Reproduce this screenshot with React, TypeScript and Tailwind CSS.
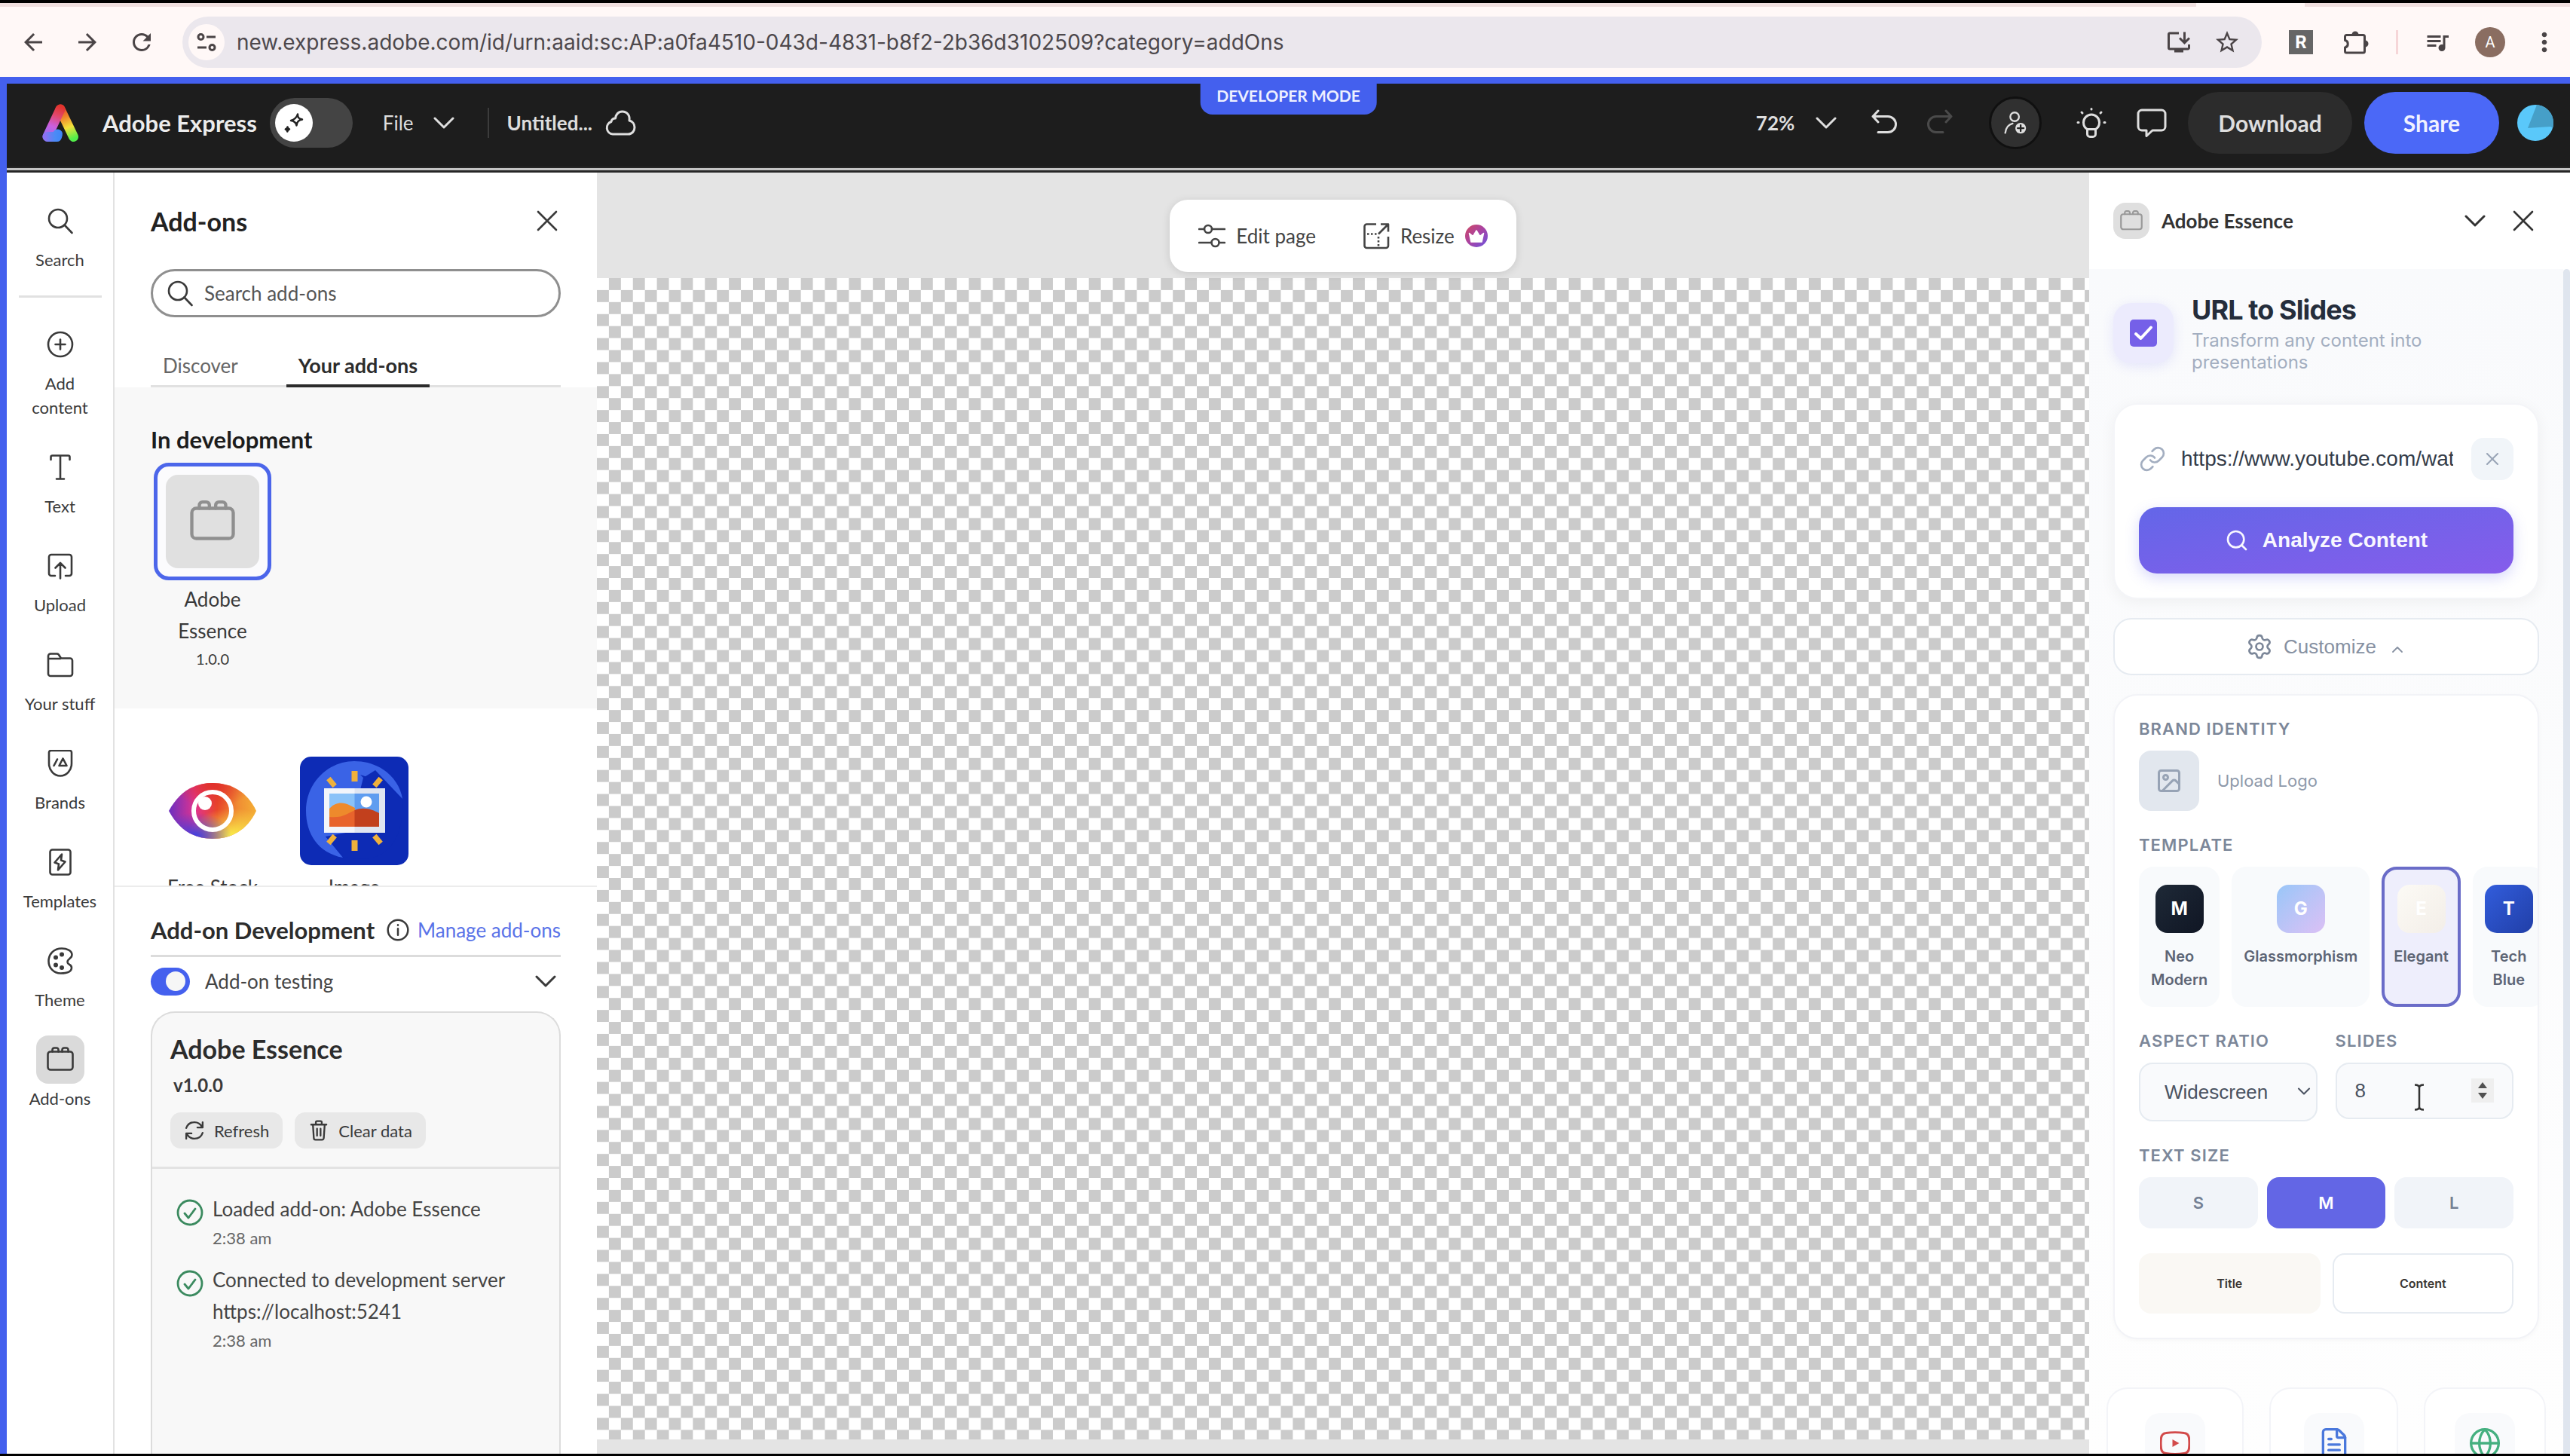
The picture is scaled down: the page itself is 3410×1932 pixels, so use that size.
import type { ReactNode, SVGProps } from "react";
import {
  ChevronDown,
  ChevronUp,
  FileText,
  Globe,
  Image as ImageIcon,
  Link,
  Search,
  Settings,
  X,
} from "lucide-react";
import {
  MdArrowBack,
  MdArrowForward,
  MdMoreVert,
  MdOutlineInstallDesktop,
  MdQueueMusic,
  MdRefresh,
  MdStarBorder,
} from "react-icons/md";

type IconProps = SVGProps<SVGSVGElement>;

function Stroke({ children, ...props }: IconProps & { children: ReactNode }) {
  return (
    <svg
      viewBox="0 0 36 36"
      fill="none"
      stroke="currentColor"
      strokeWidth={2.6}
      strokeLinecap="round"
      strokeLinejoin="round"
      aria-hidden="true"
      {...props}
    >
      {children}
    </svg>
  );
}

const BrickIcon = (p: IconProps) => (
  <Stroke {...p}>
    <rect x="1.5" y="7.500" width="33" height="24" rx="3.5" />
    <path d="M7.500 7.500V5a2.500 2.500 0 0 1 2.500-2.500h3A2.500 2.500 0 0 1 15.500 5v2.500M20.500 7.500V5A2.500 2.500 0 0 1 23 2.500h3A2.500 2.500 0 0 1 28.500 5v2.500" />
  </Stroke>
);

const SearchIcon = (p: IconProps) => (
  <Stroke {...p}>
    <circle cx="15" cy="15" r="12" />
    <path d="M23.500 23.500 33.500 34" />
  </Stroke>
);

const AddIcon = (p: IconProps) => (
  <Stroke {...p}>
    <circle cx="18" cy="18" r="16" />
    <path d="M18 11.500v13M11.500 18h13" />
  </Stroke>
);

const TextIcon = (p: IconProps) => (
  <Stroke {...p}>
    <path d="M5.500 8V4.500A2 2 0 0 1 7.500 2.500h21a2 2 0 0 1 2 2V8M18 2.500v31M13 33.500h10" />
  </Stroke>
);

const UploadIcon = (p: IconProps) => (
  <Stroke {...p}>
    <path d="M11 31H6a3 3 0 0 1-3-3V6a3 3 0 0 1 3-3h24a3 3 0 0 1 3 3v22a3 3 0 0 1-3 3h-5M18 34.500V14M11.500 20.500 18 14l6.500 6.500" />
  </Stroke>
);

const FolderIcon = (p: IconProps) => (
  <Stroke {...p}>
    <path d="M2 10V6.500A3 3 0 0 1 5 3.500h8.500a3 3 0 0 1 2.300 1L19 9.500h12a3 3 0 0 1 3 3V30a3 3 0 0 1-3 3H5a3 3 0 0 1-3-3V10h16" />
  </Stroke>
);

const BrandIcon = (p: IconProps) => (
  <Stroke {...p}>
    <path d="M3 3.500A2.500 2.500 0 0 1 5.500 1h25A2.500 2.500 0 0 1 33 3.500V18c0 9-6.500 16.500-15 16.500S3 27 3 18z" />
    <path d="m21.500 11.500-5 9.500h10zM14 12.500 9.500 21" />
  </Stroke>
);

const TemplateIcon = (p: IconProps) => (
  <Stroke {...p}>
    <rect x="4.500" y="1.500" width="27" height="33" rx="3" />
    <path d="M20 7.500 10.500 18.500l5.500 2L15 28.500l9.500-11-5.500-2z" />
  </Stroke>
);

const ThemeIcon = (p: IconProps) => (
  <Stroke {...p}>
    <path d="M20 1.500C9.500 1.500 2.500 9 2.500 18.500c0 8.500 6.500 16 16 16 6.500 0 14.500-1 14.500-7.500 0-4.500-5.500-3.500-5.500-7.500 0-4.500 6-4.500 6-9.500 0-5.500-7-8.500-13.500-8.500z" />
    <g fill="currentColor" stroke="none">
      <circle cx="12" cy="13.500" r="3" />
      <circle cx="20" cy="9.500" r="3" />
      <circle cx="12" cy="23.500" r="3" />
      <circle cx="20" cy="27" r="3" />
    </g>
  </Stroke>
);

function ExpressLogo() {
  return (
    <svg viewBox="0 0 48 50" className="h-[50px] w-12 shrink-0" fill="none" strokeLinecap="round" aria-hidden="true">
      <defs>
        <linearGradient id="legR" gradientUnits="userSpaceOnUse" x1="24" y1="3" x2="41" y2="46">
          <stop offset="0" stopColor="#e2342c" />
          <stop offset="0.35" stopColor="#f08a2c" />
          <stop offset="0.65" stopColor="#f3e23b" />
          <stop offset="1" stopColor="#52ee4a" />
        </linearGradient>
        <linearGradient id="legL" gradientUnits="userSpaceOnUse" x1="24" y1="3" x2="8" y2="46">
          <stop offset="0" stopColor="#e2342c" />
          <stop offset="0.3" stopColor="#e2486f" />
          <stop offset="0.62" stopColor="#c95fe0" />
          <stop offset="1" stopColor="#8a72f2" />
        </linearGradient>
        <linearGradient id="foot" gradientUnits="userSpaceOnUse" x1="4" y1="44" x2="26" y2="44">
          <stop offset="0" stopColor="#8a72f2" />
          <stop offset="0.6" stopColor="#4a8bf6" />
          <stop offset="1" stopColor="#3f86f7" />
        </linearGradient>
      </defs>
      <path d="M24 7 41.500 43.500" stroke="url(#legR)" strokeWidth="13" />
      <path d="M24 7 7 43" stroke="url(#legL)" strokeWidth="13" />
      <path d="M7 43.500h12.500L20.500 40" stroke="url(#foot)" strokeWidth="13" strokeLinejoin="round" />
    </svg>
  );
}

function Chevron({ className }: { className: string }) {
  return (
    <svg viewBox="0 0 28 16" className={className} fill="none" stroke="currentColor" strokeWidth="3" strokeLinecap="round" strokeLinejoin="round" aria-hidden="true">
      <path d="M2 2 14 14 26 2" />
    </svg>
  );
}

function Cross({ className }: { className: string }) {
  return (
    <svg viewBox="0 0 28 28" className={className} fill="none" stroke="currentColor" strokeWidth="2.600" strokeLinecap="round" aria-hidden="true">
      <path d="M2 2 26 26M26 2 2 26" />
    </svg>
  );
}

function BrowserBar() {
  return (
    <div className="bg-[#fff8f7] text-[#4a4446]">
      <div className="h-1 bg-black" />
      <div className="flex h-[5px] justify-end bg-[#f0dfdf] pr-[352px]">
        <div className="w-[144px] bg-[#fff8f7]" />
      </div>
      <div className="flex h-[93px] items-center pr-[14px] pl-6">
        <button aria-label="Back" className="grid size-10 place-items-center"><MdArrowBack className="size-9" /></button>
        <button aria-label="Forward" className="ml-8 grid size-10 place-items-center"><MdArrowForward className="size-9" /></button>
        <button aria-label="Reload" className="ml-8 grid size-10 place-items-center"><MdRefresh className="size-9" /></button>
        <div className="ml-[34px] flex h-[68px] flex-1 items-center rounded-full bg-[#ebe7ed] pr-7 pl-2">
          <button aria-label="Site information" className="grid size-12 place-items-center rounded-full bg-[#fff8f7]">
            <svg viewBox="0 0 26 26" className="size-[26px]" fill="none" stroke="currentColor" strokeWidth="3">
              <circle cx="5.500" cy="6" r="3.500" />
              <path d="M13 6h12M1 20h12" />
              <circle cx="20.500" cy="20" r="3.500" />
            </svg>
          </button>
          <input
            aria-label="Address"
            readOnly
            className="ml-4 min-w-0 flex-1 bg-transparent font-['Inter',sans-serif] text-[28px] text-[#4d484c] outline-none"
            value="new.express.adobe.com/id/urn:aaid:sc:AP:a0fa4510-043d-4831-b8f2-2b36d3102509?category=addOns"
          />
          <button aria-label="Install app" className="mr-7"><MdOutlineInstallDesktop className="size-9" /></button>
          <button aria-label="Bookmark"><MdStarBorder className="size-9" /></button>
        </div>
        <div className="ml-9 flex items-center">
          <span className="grid size-8 place-items-center bg-[#666] font-['Roboto',sans-serif] text-2xl font-bold text-white">R</span>
          <svg viewBox="0 0 34 34" className="ml-10 size-[34px]" aria-label="Extensions">
            <path d="M4.500 7.500h22a2 2 0 0 1 2 2V29a2 2 0 0 1-2 2h-22a2 2 0 0 1-2-2v-5c5-1 5-8.500 0-9.500v-5a2 2 0 0 1 2-2z" fill="none" stroke="currentColor" strokeWidth="3" strokeLinejoin="round" />
            <path d="M11.500 7a4.500 4.500 0 0 1 9 0zM29 14.500a4.500 4.500 0 0 1 0 9z" fill="currentColor" />
          </svg>
          <span className="ml-9 h-8 w-[3px] bg-[#f6d6d8]" />
          <MdQueueMusic className="ml-[34px] size-9" />
          <span className="ml-8 grid size-10 place-items-center rounded-full bg-[#8a6d61] font-['Roboto',sans-serif] text-xl text-white">A</span>
          <MdMoreVert className="ml-8 size-10" />
        </div>
      </div>
    </div>
  );
}

function AppHeader() {
  return (
    <header className="relative flex h-[110px] items-center bg-[#1d1d1d] pr-[22px] pb-[6px] pl-[47px] text-[#dedede]">
      <div className="absolute -top-[9px] left-1/2 flex h-[50px] -translate-x-1/2 items-center rounded-b-2xl bg-[#4460ee] px-[22px] text-[21px] font-bold text-[#eef0ff]">
        DEVELOPER MODE
      </div>
      <ExpressLogo />
      <span className="ml-8 text-[31px] font-bold whitespace-nowrap text-[#ececec]">Adobe Express</span>
      <button role="switch" aria-checked="false" aria-label="AI assistant" className="ml-[17px] h-[66px] w-[110px] rounded-full bg-[#444] p-[7px]">
        <span className="grid size-[50px] place-items-center rounded-full bg-white">
          <svg viewBox="0 0 28 28" className="size-7" fill="none" stroke="#222" strokeWidth="2.500" strokeLinejoin="round">
            <path d="M19 2.500c0 4.500 1 6 6 7-4.500 1-7 2.500-7.500 8-1-4.500-3-6-7.500-6.500 5-1.500 7.500-3.500 9-8.500z" />
            <path d="M5.500 19.500c.3 2 .8 2.500 2.500 3-1.700.4-2.300 1-2.700 3-.3-2-.8-2.500-2.500-3 1.700-.4 2.300-1 2.700-3z" fill="#222" />
          </svg>
        </span>
      </button>
      <button className="ml-10 flex items-center gap-[26px] text-[26px]">
        File <Chevron className="h-4 w-7" />
      </button>
      <span className="ml-11 h-10 w-[2px] bg-[#3c3c3c]" />
      <span className="ml-6 text-[26px] font-bold">Untitled...</span>
      <svg viewBox="0 0 42 34" className="ml-4 h-[34px] w-[42px]" fill="none" stroke="currentColor" strokeWidth="3" strokeLinejoin="round" aria-label="Saved to cloud">
        <path d="M11 32a8.500 8.500 0 0 1-2-16.500c.5-2.500 2.500-4.500 5.500-4.500C15 6 18.500 2 23.500 2 30 2 34 7 33 14c4 1 7 4.500 7 9 0 5-3.500 9-8.500 9z" />
      </svg>

      <div className="ml-auto flex items-center">
        <button className="flex items-center gap-7 text-[26px] font-bold">
          72% <Chevron className="h-4 w-7" />
        </button>
        <button aria-label="Undo" className="ml-[46px]">
          <Stroke className="size-9" strokeWidth={3}>
            <path d="M9 2 2 9.500 9 17M2 9.500h20a10.500 10.500 0 0 1 0 21H9" />
          </Stroke>
        </button>
        <button aria-label="Redo" className="ml-9 text-[#4a4a4a]">
          <Stroke className="size-9" strokeWidth={3}>
            <path d="m27 2 7 7.500-7 7.500M34 9.500H14a10.500 10.500 0 0 0 0 21h9" />
          </Stroke>
        </button>
        <button aria-label="Invite people" className="ml-12 grid size-[70px] place-items-center rounded-full border-[3px] border-[#101010] bg-[#303030]">
          <Stroke className="size-8">
            <circle cx="17" cy="9" r="6.500" />
            <path d="M3 33c1-8 5-12.500 11-14" />
            <circle cx="26" cy="26" r="8" fill="currentColor" stroke="none" />
            <path d="M26 21.500v9M21.500 26h9" stroke="#222" />
          </Stroke>
        </button>
        <button aria-label="What's new" className="ml-[46px]">
          <svg viewBox="0 0 40 42" className="h-[42px] w-10" fill="none" stroke="currentColor" strokeWidth="3" strokeLinecap="round">
            <path d="M14.500 29.500C11 27.500 9.500 23.500 9.500 20.500a10.500 10.500 0 0 1 21 0c0 3-1.500 7-5 9M14.500 29.500V36a3.500 3.500 0 0 0 3.500 3.500h4a3.500 3.500 0 0 0 3.500-3.500v-6.500zM20 2.500v.500M7 7l1 1M33 7l-1 1M2 20.500h1M37 20.500h1" />
          </svg>
        </button>
        <button aria-label="Comments" className="ml-10">
          <svg viewBox="0 0 40 38" className="h-[38px] w-10" fill="none" stroke="currentColor" strokeWidth="3" strokeLinejoin="round">
            <path d="M7 2h26a5 5 0 0 1 5 5v17a5 5 0 0 1-5 5H21l-8 7.500V29H7a5 5 0 0 1-5-5V7a5 5 0 0 1 5-5z" />
          </svg>
        </button>
        <button className="ml-7 h-[82px] rounded-full bg-[#2c2c2c] px-10 text-[30px] font-bold">Download</button>
        <button className="ml-4 h-[82px] rounded-full bg-[#4b68f7] px-[52px] text-[30px] font-bold text-[#f0f2ff]">Share</button>
        <button aria-label="Account" className="ml-6 overflow-hidden rounded-full">
          <svg viewBox="0 0 48 48" className="size-12">
            <rect width="48" height="48" fill="#5ac8fa" />
            <path d="M26 0 14 31h34V0z" fill="#469fc8" />
            <path d="M13 31h35l-4-2z" fill="#5ac8fa" />
          </svg>
        </button>
      </div>
    </header>
  );
}

function RailItem({ icon, label, active }: { icon: ReactNode; label: string; active?: boolean }) {
  return (
    <button className="flex w-full flex-col items-center gap-1">
      <span className={active ? "grid size-16 place-items-center rounded-2xl bg-[#dadada]" : "grid size-16 place-items-center"}>{icon}</span>
      <span className="w-[110px] text-center text-[22px] leading-8">{label}</span>
    </button>
  );
}

function Rail() {
  return (
    <nav className="flex w-[143px] shrink-0 flex-col items-center gap-[31px] border-r-2 border-[#e2e2e2] bg-white pt-8 text-[#3a3a3a]">
      <RailItem icon={<SearchIcon className="size-9" />} label="Search" />
      <hr className="-mb-px w-[110px] border-t-[3px] border-[#e1e1e1]" />
      <RailItem icon={<AddIcon className="size-9" />} label="Add content" />
      <RailItem icon={<TextIcon className="size-9" />} label="Text" />
      <RailItem icon={<UploadIcon className="size-9" />} label="Upload" />
      <RailItem icon={<FolderIcon className="size-9" />} label="Your stuff" />
      <RailItem icon={<BrandIcon className="size-9" />} label="Brands" />
      <RailItem icon={<TemplateIcon className="size-9" />} label="Templates" />
      <RailItem icon={<ThemeIcon className="size-9" />} label="Theme" />
      <RailItem icon={<BrickIcon className="size-9" />} label="Add-ons" active />
    </nav>
  );
}

function EyeLogo() {
  return (
    <svg viewBox="0 0 144 144" className="size-36 shrink-0" aria-hidden="true">
      <defs>
        <linearGradient id="eyeBase" x1="0" y1="0" x2="1" y2="0">
          <stop offset="0" stopColor="#6a2fc0" />
          <stop offset="0.3" stopColor="#e0338f" />
          <stop offset="0.55" stopColor="#e8452a" />
          <stop offset="0.8" stopColor="#f08e33" />
          <stop offset="1" stopColor="#f4ae35" />
        </linearGradient>
        <radialGradient id="eyeYellow" cx="0.72" cy="0.95" r="0.5">
          <stop offset="0" stopColor="#faf04a" />
          <stop offset="1" stopColor="#faf04a" stopOpacity="0" />
        </radialGradient>
        <radialGradient id="eyeBlue" cx="0.3" cy="0.95" r="0.42">
          <stop offset="0" stopColor="#3d3fe0" />
          <stop offset="1" stopColor="#3d3fe0" stopOpacity="0" />
        </radialGradient>
        <radialGradient id="eyeRed" cx="0.5" cy="0" r="0.45">
          <stop offset="0" stopColor="#e0302a" />
          <stop offset="1" stopColor="#e0302a" stopOpacity="0" />
        </radialGradient>
      </defs>
      {["url(#eyeBase)", "url(#eyeRed)", "url(#eyeYellow)", "url(#eyeBlue)"].map((fill) => (
        <path key={fill} fill={fill} d="M14 72C28 46 48 35 72 35s46 11 58 37c-12 26-34 37-58 37S28 98 14 72z" />
      ))}
      <circle cx="72" cy="72" r="25" fill="none" stroke="#fff" strokeWidth="6" />
      <circle cx="62" cy="62" r="9" fill="#fff" />
    </svg>
  );
}

function ImageLogo() {
  return (
    <svg viewBox="0 0 144 144" className="size-36 shrink-0" aria-hidden="true">
      <rect width="144" height="144" rx="15" fill="#0d2bb5" />
      <path d="M57 134C24 128 8 102 8 72 8 34 38 6 72 6c36 0 60 24 64 50L100 18 84 28 66 100 34 106z" fill="#3a63e6" />
      <path d="M80 24 120 64V110L60 110 34 106l26 28c-12-4 20 6 40-1 24-8 38-35 36-76L112 34z" fill="#0d2bb5" />
      <g fill="#f0b13c">
        <rect x="68.500" y="19" width="8" height="14" />
        <rect x="68.500" y="111" width="8" height="14" />
        <rect x="-3.500" y="-6.500" width="7" height="13" transform="translate(42 34) rotate(-40)" />
        <rect x="-3.500" y="-6.500" width="7" height="13" transform="translate(103 34) rotate(40)" />
        <rect x="-3.500" y="-6.500" width="7" height="13" transform="translate(42 110) rotate(40)" />
        <rect x="-3.500" y="-6.500" width="7" height="13" transform="translate(103 110) rotate(-40)" />
      </g>
      <rect x="32" y="42" width="81" height="59" fill="#f2f5fb" />
      <path d="M72.500 42H113v59H72.500z" fill="#dfe5f1" />
      <rect x="39" y="49" width="66" height="44" fill="#8ac2f8" />
      <path d="M72.500 49H105v44H72.500z" fill="#5f9df0" />
      <circle cx="88" cy="60" r="7.500" fill="#fff" />
      <path d="M39 69c8-9 18-9 26-5l8 4v25H39z" fill="#ee8a2c" />
      <path d="M39 80c18 2 24-5 34-9v22H39z" fill="#e8632c" />
      <path d="M72.500 71c12-5 24-1 32.500 4v18H72.500z" fill="#c2401d" />
    </svg>
  );
}

function LogEntry({ lines, time }: { lines: string[]; time: string }) {
  return (
    <li className="flex gap-3">
      <Stroke className="mt-2 size-9 shrink-0 text-[#3b8a5f]" strokeWidth={2.8}>
        <circle cx="18" cy="18" r="16" />
        <path d="m11 19 5 6 9-12" />
      </Stroke>
      <div>
        {lines.map((l) => (
          <p key={l} className="text-[26px] leading-[42px] whitespace-nowrap text-[#444]">{l}</p>
        ))}
        <p className="text-[22px] leading-9 text-[#666]">{time}</p>
      </div>
    </li>
  );
}

function AddOnsPanel() {
  return (
    <aside className="flex w-[640px] shrink-0 flex-col bg-white text-[#3a3a3a]">
      <div className="px-12 pt-8">
        <div className="flex h-16 items-center justify-between">
          <h1 className="text-[34px] font-bold text-[#222]">Add-ons</h1>
          <button aria-label="Close add-ons" className="mr-1"><Cross className="size-7" /></button>
        </div>
        <label className="mt-8 flex h-16 items-center gap-[14px] rounded-full border-[3px] border-[#8f8f8f] pl-[18px]">
          <SearchIcon className="size-9" />
          <input placeholder="Search add-ons" className="min-w-0 flex-1 bg-transparent text-[26px] outline-none placeholder:text-[#555]" />
        </label>
        <div role="tablist" className="mt-9 flex gap-12 shadow-[inset_0_-3px_0_#e1e1e1]">
          <button role="tab" aria-selected="false" className="h-[57px] px-4 text-[26px] text-[#666]">Discover</button>
          <button role="tab" aria-selected="true" className="h-[57px] border-b-[4px] border-[#2c2c2c] px-4 pt-1 text-[27px] font-bold text-[#2c2c2c]">Your add-ons</button>
        </div>
      </div>

      <section className="bg-[#f8f8f8] px-12 pt-12 pb-[50px]">
        <h2 className="text-[31px] leading-[42px] font-bold text-[#1c1c1c]">In development</h2>
        <button className="mt-[10px] flex w-[164px] flex-col items-center">
          <span className="grid size-[156px] place-items-center rounded-[20px] border-[5px] border-[#4c66ea] bg-[#fbfbfd]">
            <span className="grid size-[124px] place-items-center rounded-2xl bg-[#e0e0e0] text-[#8f8f8f]">
              <BrickIcon className="size-[60px]" />
            </span>
          </span>
          <span className="mt-1 text-[26px] leading-[42px]">Adobe<br />Essence</span>
          <span className="text-[20px] leading-8">1.0.0</span>
        </button>
      </section>

      <section className="flex h-[237px] shrink-0 gap-6 overflow-hidden border-b-2 border-[#ececec] px-12 pt-16 text-[26px] leading-[42px]">
        <button className="flex w-[164px] flex-col items-center gap-2"><EyeLogo /><span className="whitespace-nowrap">Free Stock</span></button>
        <button className="flex w-[164px] flex-col items-center gap-2"><ImageLogo /><span>Image</span></button>
      </section>

      <section className="flex flex-1 flex-col px-12 pt-8">
        <div className="flex items-center">
          <h2 className="text-[31px] leading-[50px] font-bold whitespace-nowrap text-[#2c2c2c]">Add-on Development</h2>
          <Stroke className="ml-4 size-[30px]" strokeWidth={3}>
            <circle cx="18" cy="18" r="16" />
            <path d="M18 16v10M18 10v.500" />
          </Stroke>
          <a href="#manage" className="ml-auto text-[26px] whitespace-nowrap text-[#5a73e8]">Manage add-ons</a>
        </div>
        <hr className="mt-2 border-t-[3px] border-[#dcdcdc]" />
        <div className="mt-3 flex h-10 items-center">
          <input
            id="testing"
            type="checkbox"
            defaultChecked
            className="flex h-[37px] w-[52px] appearance-none items-center justify-end rounded-full bg-[#4460ee] pr-[6px] before:size-[26px] before:rounded-full before:bg-[#f6f6f6] before:content-['']"
          />
          <label htmlFor="testing" className="ml-5 text-[26px] text-[#444]">Add-on testing</label>
          <button aria-label="Collapse" className="mr-[6px] ml-auto"><Chevron className="h-4 w-7" /></button>
        </div>
        <div className="mt-5 flex-1 rounded-t-[32px] border-2 border-b-0 border-[#dcdcdc] bg-[#f8f8f8]">
          <div className="border-b-[3px] border-[#e3e3e3] px-6 py-6">
            <h3 className="text-[34px] leading-[48px] font-bold text-[#2c2c2c]">Adobe Essence</h3>
            <p className="mt-1 ml-1 text-2xl leading-10 font-bold">v1.0.0</p>
            <div className="mt-4 flex gap-4 text-[22px]">
              <button className="flex h-12 items-center gap-3 rounded-[14px] bg-[#e8e8e8] px-[18px]">
                <Stroke className="size-7" strokeWidth={3}>
                  <path d="M4 14C6 8 11 4 18 4c5 0 10 2.500 13 8M32 4v9h-9M32 22c-2 6-7 10-14 10-5 0-10-2.500-13-8M4 32v-9h9" />
                </Stroke>
                Refresh
              </button>
              <button className="flex h-12 items-center gap-3 rounded-[14px] bg-[#e8e8e8] px-[18px]">
                <Stroke className="size-7" strokeWidth={3}>
                  <path d="M5 8h26M13 7V4a2 2 0 0 1 2-2h6a2 2 0 0 1 2 2v3M8 9l1.500 22a3 3 0 0 0 3 3h11a3 3 0 0 0 3-3L28 9M15 15v12M21 15v12" />
                </Stroke>
                Clear data
              </button>
            </div>
          </div>
          <ul className="flex flex-col gap-4 pt-8 pl-8">
            <LogEntry lines={["Loaded add-on: Adobe Essence"]} time="2:38 am" />
            <LogEntry lines={["Connected to development server", "https://localhost:5241"]} time="2:38 am" />
          </ul>
        </div>
      </section>
    </aside>
  );
}

function Canvas() {
  return (
    <main className="flex min-w-0 flex-1 flex-col items-center bg-[#e4e4e4] pt-9">
      <div className="z-10 flex h-24 items-center gap-[62px] rounded-[24px] bg-white px-[38px] text-[26px] text-[#444] shadow-[0_2px_12px_rgba(0,0,0,0.12)]">
        <button className="flex items-center gap-[14px]">
          <Stroke className="size-9">
            <circle cx="13" cy="9" r="5" />
            <path d="M1 9h7M18 9h17M1 27h16M28 27h7" />
            <circle cx="22.500" cy="27" r="5" />
          </Stroke>
          Edit page
        </button>
        <button className="flex items-center gap-[14px]">
          <Stroke className="size-9" strokeLinecap="butt">
            <path d="M18 2.500H5.500a3 3 0 0 0-3 3V31a3 3 0 0 0 3 3H31a3 3 0 0 0 3-3V19M24 2.500h10v10M34 2.500 21 15.500" />
            <path d="M6 15.500h13M21 19v14" strokeDasharray="2.500 2.500" />
          </Stroke>
          Resize
          <svg viewBox="0 0 30 30" className="size-[30px]" aria-label="Premium">
            <defs>
              <linearGradient id="crown" x1="0" y1="0" x2="1" y2="1">
                <stop offset="0" stopColor="#d04860" />
                <stop offset="0.5" stopColor="#a843a5" />
                <stop offset="1" stopColor="#6a55e0" />
              </linearGradient>
            </defs>
            <circle cx="15" cy="15" r="15" fill="url(#crown)" />
            <path d="M8 23 5.500 11.500l5 4L15 8l4.500 7.500 5-4L22 23z" fill="#fff" stroke="#fff" strokeWidth="1.500" strokeLinejoin="round" />
          </svg>
        </button>
      </div>
      <svg className="mt-2 mb-[19px] min-h-0 w-full flex-1" aria-label="Blank page">
        <defs>
          <pattern id="checker" width="31.840" height="31.840" patternUnits="userSpaceOnUse">
            <rect width="31.840" height="31.840" fill="#fff" />
            <path d="M15.920 0h15.920v15.920H15.920zM0 15.920h15.920v15.920H0z" fill="#cbcbcb" />
          </pattern>
        </defs>
        <rect width="100%" height="100%" fill="url(#checker)" />
      </svg>
    </main>
  );
}

function FieldLabel({ children, htmlFor }: { children: string; htmlFor?: string }) {
  return (
    <label htmlFor={htmlFor} className="mb-[17px] block text-[22px] leading-6 font-semibold tracking-wider whitespace-nowrap text-[#7c8799] uppercase">
      {children}
    </label>
  );
}

function TemplateCard({ letter, name, tile, active }: { letter: string; name: string[]; tile: string; active?: boolean }) {
  return (
    <button
      className={
        active
          ? "flex h-[186px] shrink-0 flex-col items-center rounded-[20px] border-4 border-[#6a6cc8] bg-[#eeeefc] px-3 pt-5"
          : "flex h-[186px] shrink-0 flex-col items-center rounded-[20px] border-4 border-[#f8fafc] bg-[#f8fafc] px-3 pt-5"
      }
    >
      <span className={tile}>{letter}</span>
      <span className="mt-4 text-[20px] leading-[31px] font-semibold text-[#5d6575]">
        {name.map((n) => (
          <span key={n} className="block">{n}</span>
        ))}
      </span>
    </button>
  );
}

function EssencePanel() {
  return (
    <aside className="flex w-[638px] shrink-0 flex-col bg-white">
      <div className="flex h-32 shrink-0 items-center pr-12 pl-8 text-[#333]">
        <span className="grid size-12 place-items-center rounded-2xl bg-[#dfdfdf] text-[#999]"><BrickIcon className="size-[30px]" /></span>
        <h2 className="ml-4 text-[26px] font-bold whitespace-nowrap">Adobe Essence</h2>
        <button aria-label="Minimize" className="ml-auto"><Chevron className="h-4 w-7" /></button>
        <button aria-label="Close" className="ml-9"><Cross className="size-7" /></button>
      </div>
      <div className="flex min-h-0 flex-1">
        <div className="min-w-0 flex-1 overflow-hidden bg-gradient-to-b from-[#f9fafc] to-[#fefefe] px-8 pt-8 font-['Inter',sans-serif]">
          <div className="flex items-center gap-6">
            <span className="grid size-20 shrink-0 place-items-center rounded-[24px] bg-[#ecebfd] shadow-[0_4px_16px_rgba(99,102,241,0.14)]">
              <svg viewBox="0 0 36 36" className="size-9" aria-hidden="true">
                <rect width="36" height="36" rx="5" fill="#7560e8" />
                <path d="m8 19 6.500 6L28 10.500" fill="none" stroke="#fff" strokeWidth="4" strokeLinecap="round" strokeLinejoin="round" />
              </svg>
            </span>
            <div>
              <h1 className="text-[36px] leading-[44px] font-bold tracking-tight text-[#252d3b]">URL to Slides</h1>
              <p className="mt-1 w-[330px] text-[24px] leading-[29px] text-[#a3aec0]">Transform any content into presentations</p>
            </div>
          </div>

          <div className="mt-10 rounded-[32px] border-2 border-[#f4f5f8] bg-white p-8 shadow-[0_4px_20px_rgba(0,0,0,0.05)]">
            <div className="flex h-20 items-center gap-5 font-['Liberation_Sans',sans-serif]">
              <Link className="size-9 shrink-0 text-[#a3aec0]" strokeWidth={1.8} />
              <input aria-label="Content URL" className="mr-1 min-w-0 flex-1 bg-transparent text-[28px] text-[#333b48] outline-none" defaultValue="https://www.youtube.com/wat" />
              <button aria-label="Clear URL" className="grid size-14 shrink-0 place-items-center rounded-2xl bg-[#f1f5f9] text-[#9aa5b7]"><X className="size-7" strokeWidth={1.8} /></button>
            </div>
            <button className="mt-6 flex h-[88px] w-full items-center justify-center gap-[18px] rounded-[24px] bg-gradient-to-br from-[#6366e8] to-[#855ceb] font-['Liberation_Sans',sans-serif] text-[28px] font-bold text-[#f8f7ff] shadow-[0_6px_18px_rgba(99,102,241,0.25)]">
              <Search className="size-8" strokeWidth={2} />
              Analyze Content
            </button>
          </div>

          <button className="mt-[25px] flex h-[76px] w-full items-center justify-center rounded-[24px] border-2 border-[#e6ebf1] bg-white font-['Liberation_Sans',sans-serif] text-[26px] text-[#8791a2]">
            <Settings className="size-9 text-[#7c8799]" strokeWidth={1.8} />
            <span className="ml-[14px]">Customize</span>
            <ChevronUp className="mt-2 ml-4 size-6" strokeWidth={1.8} />
          </button>

          <div className="mt-[25px] flex flex-col gap-[33px] overflow-hidden rounded-[32px] border-2 border-[#f2f3f7] bg-white p-8 shadow-[0_2px_6px_rgba(0,0,0,0.03)]">
            <div>
              <FieldLabel>Brand Identity</FieldLabel>
              <button className="flex items-center gap-6 text-[22px] text-[#8e99aa]">
                <span className="grid size-20 place-items-center rounded-2xl bg-[#e2e7ee] text-[#97a3b5]">
                  <ImageIcon className="size-9" strokeWidth={2} />
                </span>
                Upload Logo
              </button>
            </div>
            <div>
              <FieldLabel>Template</FieldLabel>
              <div className="-mr-8 flex gap-4 overflow-hidden">
                <TemplateCard letter="M" name={["Neo", "Modern"]} tile="grid size-16 place-items-center rounded-2xl bg-gradient-to-br from-[#1e2937] to-[#101624] text-[24px] font-bold text-white" />
                <TemplateCard letter="G" name={["Glassmorphism"]} tile="grid size-16 place-items-center rounded-2xl bg-gradient-to-br from-[#98c6f8] to-[#dbc0f5] text-[24px] font-bold text-white" />
                <TemplateCard active letter="E" name={["Elegant"]} tile="grid size-16 place-items-center rounded-2xl bg-gradient-to-br from-[#fcfaf5] to-[#f3eee8] text-[24px] font-bold text-white" />
                <TemplateCard letter="T" name={["Tech", "Blue"]} tile="grid size-16 place-items-center rounded-2xl bg-gradient-to-br from-[#325ddc] to-[#213fa8] text-[24px] font-bold text-white" />
              </div>
            </div>
            <div className="grid grid-cols-2 items-start gap-6">
              <div>
                <FieldLabel htmlFor="ratio">Aspect Ratio</FieldLabel>
                <div className="relative">
                  <select id="ratio" className="h-[78px] w-full appearance-none rounded-[18px] border-2 border-[#e6ebf1] bg-[#f9fafc] pl-8 font-['Liberation_Sans',sans-serif] text-[26px] text-[#4a5261]">
                    <option>Widescreen</option>
                  </select>
                  <ChevronDown className="pointer-events-none absolute top-[24px] right-[4px] size-7 text-[#4a5261]" strokeWidth={1.8} />
                </div>
              </div>
              <div>
                <FieldLabel htmlFor="slides">Slides</FieldLabel>
                <div className="relative">
                  <input
                    id="slides"
                    type="number"
                    defaultValue={8}
                    className="h-[75px] w-full [appearance:textfield] rounded-[18px] border-2 border-[#e6ebf1] bg-[#f9fafc] pl-6 font-['Liberation_Sans',sans-serif] text-[26px] text-[#4a5261] [&::-webkit-inner-spin-button]:appearance-none"
                  />
                  <svg viewBox="0 0 30 32" className="absolute top-[21px] right-[26px] h-8 w-[30px]" aria-hidden="true">
                    <rect width="30" height="32" fill="#efefef" />
                    <path d="M9 13h12L15 5zM9 19h12l-6 8z" fill="#505050" />
                  </svg>
                  <svg viewBox="0 0 14 36" className="absolute top-[28px] left-[104px] h-9 w-[14px]" fill="none" stroke="#333" strokeWidth="2.500" aria-hidden="true">
                    <path d="M1 1.500c4 0 6 1.500 6 4v25c0 2.500-2 4-6 4M13 1.500c-4 0-6 1.500-6 4M13 34.500c-4 0-6-1.500-6-4" />
                  </svg>
                </div>
              </div>
            </div>
            <div>
              <FieldLabel>Text Size</FieldLabel>
              <div className="grid grid-cols-3 gap-3 text-[22px] font-semibold text-[#748094]">
                <button className="h-[68px] rounded-2xl bg-[#f1f4f9]">S</button>
                <button className="h-[68px] rounded-2xl bg-[#6366e5] text-white">M</button>
                <button className="h-[68px] rounded-2xl bg-[#f1f4f9]">L</button>
              </div>
            </div>
            <div className="grid grid-cols-2 gap-4 text-[16px] font-semibold text-[#3a3633]">
              <div className="grid h-20 place-items-center rounded-2xl bg-[#faf8f4]">Title</div>
              <div className="grid h-20 place-items-center rounded-2xl border-2 border-[#e6ebf1]">Content</div>
            </div>
          </div>

          <div className="-mx-[9px] mt-16 grid grid-cols-[182fr_170fr_162fr] gap-[34px]">
            <button className="flex h-[180px] justify-center rounded-[28px] border-2 border-[#f3f4f8] bg-white pt-8" aria-label="Video">
              <span className="grid size-20 place-items-center rounded-[20px] bg-[#f9fafc] text-[#d24a4a]">
                <svg viewBox="0 0 40 40" className="size-10" fill="none" stroke="currentColor" strokeWidth="3">
                  <path d="M8 6.500C14 5.500 26 5.500 32 6.500c4 .5 6 3 6.500 6.500.5 4 .5 10 0 14-.5 3.500-2.500 6-6.500 6.500-6 1-18 1-24 0C4 33 2 30.500 1.500 27 1 23 1 17 1.500 13 2 9.500 4 7 8 6.500z" />
                  <path d="m16.500 15 9 5-9 5z" fill="currentColor" stroke="none" />
                </svg>
              </span>
            </button>
            <button className="flex h-[180px] justify-center rounded-[28px] border-2 border-[#f3f4f8] bg-white pt-8" aria-label="Document">
              <span className="grid size-20 place-items-center rounded-[20px] bg-[#f9fafc] text-[#4a78dc]">
                <FileText className="size-11" strokeWidth={1.8} />
              </span>
            </button>
            <button className="flex h-[180px] justify-center rounded-[28px] border-2 border-[#f3f4f8] bg-white pt-8" aria-label="Website">
              <span className="grid size-20 place-items-center rounded-[20px] bg-[#f9fafc] text-[#45b080]">
                <Globe className="size-11" strokeWidth={1.8} />
              </span>
            </button>
          </div>
        </div>
        <div className="w-[9px] rounded-t-lg bg-[#dfe5ee]" />
      </div>
    </aside>
  );
}

export default function App() {
  return (
    <div className="flex h-screen flex-col overflow-hidden border-b-[3px] border-black bg-white font-['Lato',sans-serif]">
      <BrowserBar />
      <div className="flex min-h-0 flex-1 flex-col border-t-[9px] border-l-[9px] border-[#4460ee]">
        <AppHeader />
        <div className="h-2 shrink-0 border-t-2 border-b-[3px] border-[#262626] bg-[#c4c4c4]" />
        <div className="flex min-h-0 flex-1 overflow-hidden">
          <Rail />
          <AddOnsPanel />
          <Canvas />
          <EssencePanel />
        </div>
      </div>
    </div>
  );
}
